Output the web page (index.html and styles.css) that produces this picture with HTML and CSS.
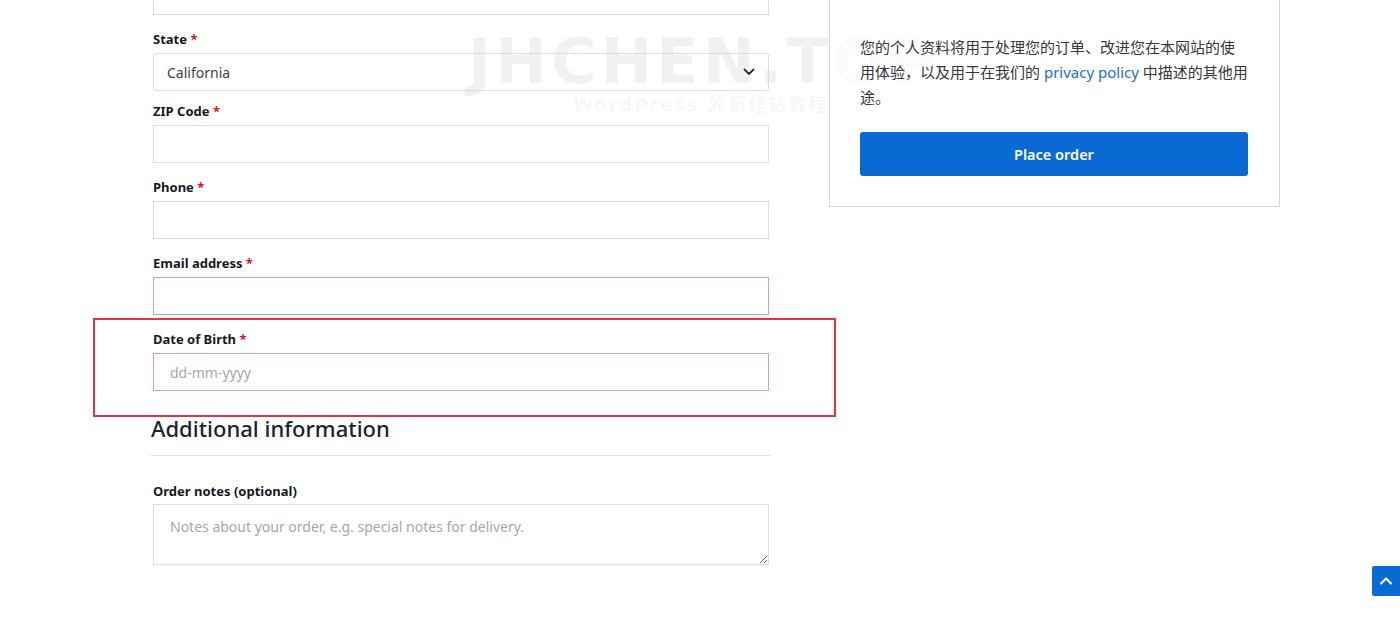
FILE: index.html
```html
<!DOCTYPE html>
<html lang="zh-CN">
<head>
<meta charset="utf-8">
<title>Checkout</title>
<link rel="stylesheet" href="styles.css">
</head>
<body>
<div class="watermark">JHCHEN.TOP<span>WordPress 外贸建站教程</span></div>

<div class="checkout">
    <div class="billing">
        <div class="field">
            <input class="input" type="text">
        </div>
        <div class="field field-select">
            <label>State <abbr>*</abbr></label>
            <div class="select">
                <span>California</span>
                <svg width="12" height="8" viewBox="0 0 12 8"><path d="M1.5 1.5 6 6l4.5-4.5" fill="none" stroke="#2b2f38" stroke-width="1.8" stroke-linecap="round" stroke-linejoin="round"/></svg>
            </div>
        </div>
        <div class="field">
            <label>ZIP Code <abbr>*</abbr></label>
            <input class="input" type="text">
        </div>
        <div class="field">
            <label>Phone <abbr>*</abbr></label>
            <input class="input" type="text">
        </div>
        <div class="field">
            <label>Email address <abbr>*</abbr></label>
            <input class="input invalid" type="text">
        </div>
        <div class="field highlight">
            <label>Date of Birth <abbr>*</abbr></label>
            <input class="input invalid" type="text" placeholder="dd-mm-yyyy">
        </div>

        <h3 class="section-title">Additional information</h3>

        <div class="field notes">
            <label>Order notes (optional)</label>
            <textarea class="input" placeholder="Notes about your order, e.g. special notes for delivery."></textarea>
        </div>
    </div>

    <div class="review">
        <div class="card">
            <p class="privacy">您的个人资料将用于处理您的订单、改进您在本网站的使用体验，以及用于在我们的 <a href="#">privacy policy</a> 中描述的其他用途。</p>
            <button class="place-order" type="button">Place order</button>
        </div>
    </div>
</div>

<a class="to-top" href="#"><svg width="14" height="10" viewBox="0 0 14 10"><path d="M2 7.5 7 2.5l5 5" fill="none" stroke="#fff" stroke-width="2" stroke-linecap="round" stroke-linejoin="round"/></svg></a>
</body>
</html>
```

FILE: styles.css
```css
body { margin: 0; background: #fff; color: #1e2128; font-family: "Noto Sans", "Noto Sans CJK SC", sans-serif; font-size: 14px; overflow: hidden; }

.checkout { position: relative; display: flex; gap: 58px; margin-top: -23px; padding-left: 151px; }
.billing { width: 620px; }
.review { width: 451px; }

.field { padding: 0 2px; margin-bottom: 14px; }
.field label { display: block; height: 20px; margin-bottom: 4px; font-size: 13px; font-weight: 700; line-height: 20px; color: #16191f; }
.field abbr { color: #e0161c; text-decoration: none; }
.field-select { margin-bottom: 10px; }

.input { display: block; box-sizing: border-box; width: 100%; height: 38px; margin: 0; padding: 0 16px; border: 1px solid #dcdcdc; border-radius: 0; background: transparent; font-family: inherit; font-size: 14px; color: #333; }
.input::placeholder { color: #a4a7ad; }
.input.invalid { border-color: #e59a9d; }

.select { display: flex; align-items: center; justify-content: space-between; box-sizing: border-box; height: 38px; padding: 0 13px; border: 1px solid #dcdcdc; border-radius: 3px; font-size: 14px; color: #3c3f45; }

.highlight { position: relative; }
.highlight::after { content: ""; position: absolute; top: -11px; left: -58px; right: -65px; bottom: -26px; border: 2px solid #e1343c; }

.section-title { margin: 23px 0 0; padding-bottom: 13px; border-bottom: 1px solid #e2e2e2; font-size: 22px; font-weight: 500; line-height: 28px; color: #1c2330; }

.notes { margin-top: 25px; }
.notes label { margin-bottom: 3px; }
.notes textarea { height: 61px; padding: 12px 16px; resize: vertical; line-height: 20px; }

.card { padding: 58px 31px 30px 30px; border: 1px solid #d6d6d6; border-top: none; background: rgba(255, 255, 255, 0.7); }
.privacy { margin: 0; font-size: 15px; line-height: 25px; color: #34373c; }
.privacy a { color: #1e6fc4; text-decoration: none; }
.place-order { display: block; width: 100%; height: 44px; margin-top: 22px; border: none; border-radius: 3px; background: #0a6ad3; color: #fff; font-family: inherit; font-size: 14.5px; font-weight: 600; }

.watermark { position: absolute; top: 30px; left: 468px; pointer-events: none; font-family: "DejaVu Sans", sans-serif; font-size: 62px; font-weight: bold; line-height: 64px; letter-spacing: 4px; color: rgba(0, 0, 0, 0.055); }
.watermark span { display: block; margin-left: 105px; font-size: 18px; line-height: 22px; letter-spacing: 2px; font-family: "DejaVu Sans", "Noto Sans CJK SC", sans-serif; }

.to-top { position: fixed; right: 0; bottom: 28px; display: flex; align-items: center; justify-content: center; width: 28px; height: 30px; border-radius: 2px 0 0 2px; background: #0a6ad3; }
```
